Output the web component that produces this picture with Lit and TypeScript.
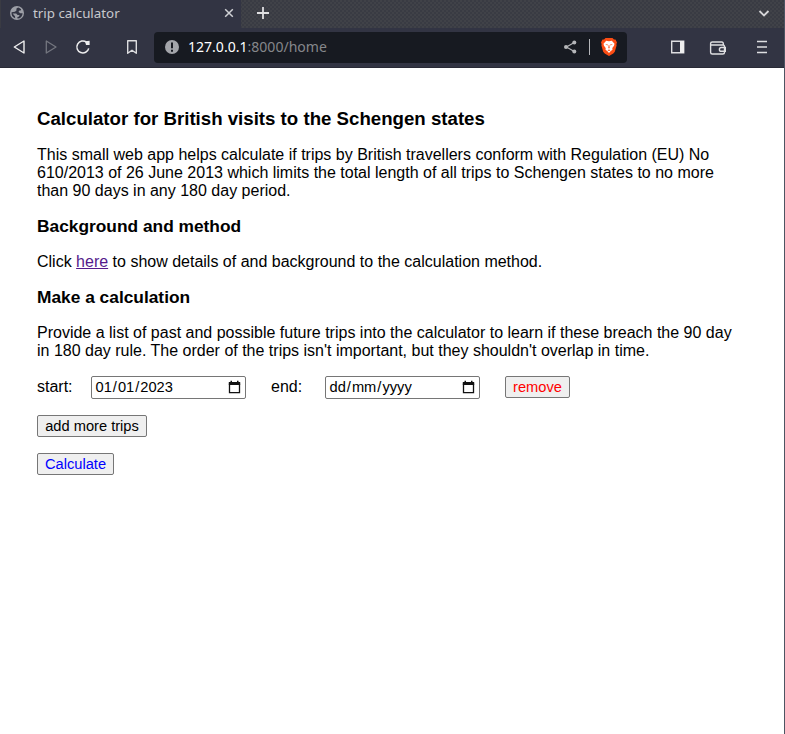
import { LitElement, html, css } from "lit";
import { customElement, property } from "lit/decorators.js";

@customElement("browser-chrome")
class BrowserChrome extends LitElement {
  static styles = css`
    :host { display: block; height: 68px; background: #323443; font-family: "Noto Sans", sans-serif; color: #d3d4d8; }
    svg { display: block; flex: none; overflow: visible; }
    .tabs {
      height: 28px; display: flex; align-items: center; background-color: #393b43;
      background-image: radial-gradient(circle at 1px 1px, #45464b 0.6px, transparent 0.9px), radial-gradient(circle at 3px 3px, #45464b 0.6px, transparent 0.9px);
      background-size: 4px 4px;
    }
    .tab { width: 241px; height: 28px; box-sizing: border-box; padding: 0 7px 2px 9px; background: #323443; display: flex; align-items: center; border-left: 1px solid #3a3b43; }
    .title { font-size: 13.333px; line-height: 18px; margin-left: 9px; flex: 1; color: #c7c8cd; margin-top: -1px; }
    .plus { margin: -2px 0 0 16px; }
    .chevron { margin: -2px 14px 0 auto; }
    .bar { height: 39px; border-bottom: 1px solid #292a36; display: flex; align-items: center; padding-left: 12px; }
    .nav { margin-top: -1px; }
    .forward { margin-left: 18px; }
    .reload { margin-left: 18px; }
    .mark { margin-left: 35px; }
    .address { width: 473px; height: 31px; margin-left: 15px; box-sizing: border-box; background: #171a21; border-radius: 4px; display: flex; align-items: center; padding: 0 10px 0 11px; }
    .url { margin-left: 9px; font-size: 14.05px; line-height: 20px; flex: 1; color: #85878b; margin-top: -1px; }
    .host { color: #fff; }
    .share { margin-right: 1px; }
    .divider { width: 1px; height: 16px; background: #b5b6ba; margin: -1px 11px 0; }
    .panel { margin-left: 43px; }
    .wallet { margin: 1px 0 0 24px; }
    .menu { margin-left: 31px; }
  `;

  render() {
    return html`
      <div class="tabs">
        <div class="tab">
          <svg width="14" height="14" viewBox="0 0 14 14"><circle cx="7" cy="7" r="7" fill="#9c9ea6"/><path d="M8.300 1.500C6.500 2 6 3 6.600 4.200L5 5.700 1.600 6.300A5.500 5.500 0 0 0 5.200 12.300L5 10.200 2.600 7.600H6.200L7.600 9H9.600L9 10.500 7.300 11.300 7.500 12.600A5.600 5.600 0 0 0 12.600 7.200L10.300 7.300 8.600 6 9 4.800 11 4.300 11 3.200A5.500 5.500 0 0 0 8.300 1.500z" fill="#323443"/></svg>
          <span class="title">trip calculator</span>
          <svg width="10" height="10" viewBox="0 0 10 10"><path d="M1.200 1.200 8.800 8.800M8.800 1.200 1.200 8.800" stroke="#d0d1d5" stroke-width="1.500"/></svg>
        </div>
        <svg class="plus" width="12" height="12" viewBox="0 0 12 12"><path d="M6 0v12M0 6h12" stroke="#dedee0" stroke-width="1.800"/></svg>
        <svg class="chevron" width="12" height="12" viewBox="0 0 12 12"><path d="m1.500 4 4.500 4.500L10.500 4" fill="none" stroke="#d5d5d8" stroke-width="1.800"/></svg>
      </div>
      <div class="bar">
        <svg class="nav" width="14" height="14" viewBox="0 0 14 14"><path d="M12 1v12L2.300 7z" fill="none" stroke="#eeeeef" stroke-width="1.400" stroke-linejoin="round"/></svg>
        <svg class="nav forward" width="14" height="14" viewBox="0 0 14 14"><path d="M2.300 1v12L12 7z" fill="none" stroke="#74767f" stroke-width="1.300" stroke-linejoin="round"/></svg>
        <svg class="nav reload" width="14" height="14" viewBox="0 0 14 14"><path d="M10.500 2.200A6 6 0 1 0 12.700 8.300" fill="none" stroke="#eeeeef" stroke-width="1.500"/><path d="M9 1.200 13.600.8V5H10z" fill="#eeeeef"/></svg>
        <svg class="nav mark" width="14" height="14" viewBox="0 0 14 14"><path d="M2.700.8h8.600v12.500L7 10.200l-4.300 3.100z" fill="none" stroke="#dddde0" stroke-width="1.400" stroke-linejoin="round"/></svg>
        <div class="address">
          <svg class="nav" width="14" height="14" viewBox="0 0 14 14"><circle cx="7" cy="7" r="7" fill="#a3a5aa"/><path d="M7 2.500v5.700M7 9.800v2" stroke="#171a21" stroke-width="2"/></svg>
          <span class="url"><span class="host">127.0.0.1</span>:8000/home</span>
          <svg class="nav share" width="13" height="14" viewBox="0 0 13 14"><path d="M10.300 2.500 2.400 7l7.900 4.500" fill="none" stroke="#b5b6b9" stroke-width="1.200"/><g fill="#b5b6b9"><circle cx="10.300" cy="2.500" r="2"/><circle cx="2" cy="7" r="2"/><circle cx="10.300" cy="11.500" r="2"/></g></svg>
          <span class="divider"></span>
          <svg class="nav" width="16" height="18" viewBox="0 0 16 18"><path d="M4.500 0h7L13 1.500l1.500.1 1.500 3-.6 1.400.2 1.500-1.800 6.200-1.500 1.800L8 18l-4.300-2.500-1.500-1.800L.4 7.500.6 6 0 4.600l1.500-3L3 1.500z" fill="#fb4d14"/><path d="m5.200 2.800 2.800.5 2.800-.5 2.700 3-.5 2-1.700 2.200.2 1.700-1.700 1.300L8 15l-1.800-2-1.700-1.300.2-1.700L3 7.800l-.5-2z" fill="#fff"/><path d="m4.200 6.300 2.700.2-.5 1.100zM11.800 6.300l-2.700.2.5 1.100zM7.700 7h.6l.4 3-.7.600-.7-.6zM6.500 12.200 8 11.500l1.500.7-1.500.7z" fill="#fb4d14"/></svg>
        </div>
        <svg class="nav panel" width="15" height="14" viewBox="0 0 15 14"><path d="M1.700 1.200h12v11.600h-12z" fill="none" stroke="#dedee1" stroke-width="1.400"/><path d="M10 1h4v12h-4z" fill="#eeeeef"/></svg>
        <svg class="wallet" width="17" height="14" viewBox="0 0 17 14"><path d="M14.300 4V2.500Q14.300 1 12.800 1H3.300Q1.600 1 1.600 2.600v8.600Q1.600 13 3.300 13h10.500q1.700 0 1.700-1.500V5.500Q15.500 4 14.100 4H1.800M16.300 6.500h-4a1.900 1.900 0 0 0 0 3.800h4z" fill="none" stroke="#dedee1" stroke-width="1.400"/></svg>
        <svg class="nav menu" width="10" height="14" viewBox="0 0 10 14"><path d="M0 1.500h10M0 7h10M0 12.500h10" stroke="#dedee1" stroke-width="1.600"/></svg>
      </div>`;
  }
}

@customElement("date-field")
class DateField extends LitElement {
  @property() value = "";

  static styles = css`
    :host { width: 155px; height: 23px; box-sizing: border-box; border: 1px solid #767676; border-radius: 2px; background: #fff; display: flex; align-items: center; padding: 0 4px 0 2.5px; font-size: 14.667px; line-height: 17px; }
    .text { flex: 1; display: flex; }
    .part { padding: 0 1px; }
    svg { display: block; margin-top: -2px; }
  `;

  render() {
    const [day, month, year] = this.value.split("/");
    return html`
      <span class="text"><span class="part">${day}</span>/<span class="part">${month}</span>/<span class="part">${year}</span></span>
      <svg width="13" height="14" viewBox="0 0 13 14"><path d="M1.500 3.500v9.200h10V3.500" fill="none" stroke="#111" stroke-width="1.300"/><path d="M.8 2h11.400v3H.8zM2.500.7H4V3H2.500zM9 .7h1.500V3H9z" fill="#111"/></svg>`;
  }
}

@customElement("app-root")
class AppRoot extends LitElement {
  static styles = css`
    :host { display: block; box-sizing: border-box; height: 734px; background: #fff; border-right: 1px solid #4d5462; font: 16px/18px "Liberation Sans", Arial, sans-serif; color: #000; }
    main { padding: 40px 37px 0; }
    h1, h2, p { margin: 0 0 16px; }
    h1 { font-size: 18.667px; line-height: 22px; }
    h2 { font-size: 17.333px; line-height: 19px; }
    .intro { margin-bottom: 17px; }
    .heading { margin-bottom: 17px; }
    .link { color: #551a8b; }
    .trip { display: flex; height: 23px; }
    .label { line-height: 21px; }
    .start { width: 54px; }
    .end { width: 54px; margin-left: 25px; }
    button { display: block; height: 22px; box-sizing: border-box; border: 1px solid #767676; border-radius: 2px; background: #efefef; color: #000; font: 14.667px/18px "Liberation Sans", Arial, sans-serif; padding: 1px 0; }
    .remove { width: 65px; margin-left: 25px; color: #f00; }
    .add { width: 110px; margin-top: 16px; }
    .calculate { width: 77px; margin-top: 16px; color: #00f; }
  `;

  render() {
    return html`
      <browser-chrome></browser-chrome>
      <main>
        <h1>Calculator for British visits to the Schengen states</h1>
        <p class="intro">This small web app helps calculate if trips by British travellers conform with Regulation (EU) No 610/2013 of 26 June 2013 which limits the total length of all trips to Schengen states to no more than 90 days in any 180 day period.</p>
        <h2 class="heading">Background and method</h2>
        <p class="intro">Click <a class="link" href="#">here</a> to show details of and background to the calculation method.</p>
        <h2 class="heading">Make a calculation</h2>
        <p>Provide a list of past and possible future trips into the calculator to learn if these breach the 90 day in 180 day rule. The order of the trips isn't important, but they shouldn't overlap in time.</p>
        <div class="trip">
          <span class="label start">start:</span>
          <date-field value="01/01/2023"></date-field>
          <span class="label end">end:</span>
          <date-field value="dd/mm/yyyy"></date-field>
          <button class="remove">remove</button>
        </div>
        <button class="add">add more trips</button>
        <button class="calculate">Calculate</button>
      </main>`;
  }
}
